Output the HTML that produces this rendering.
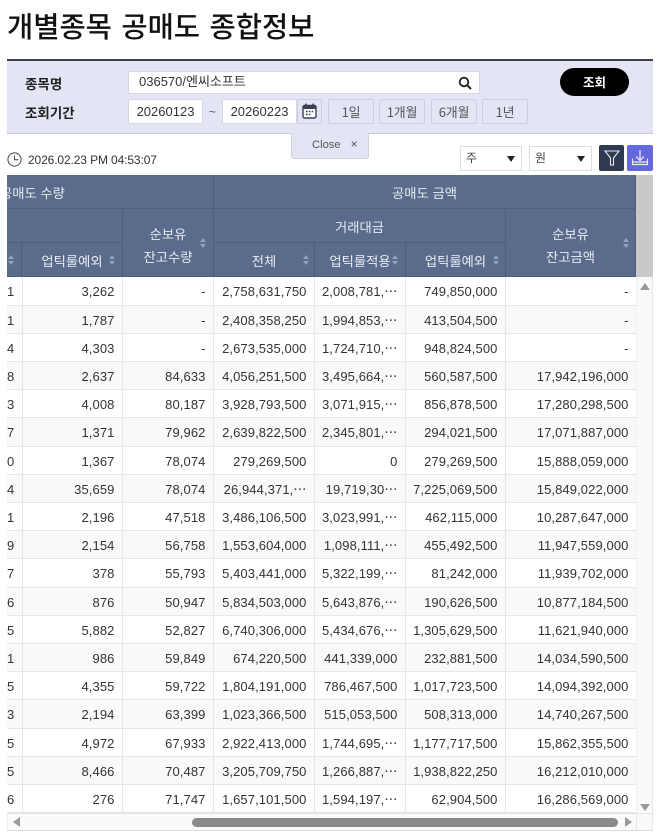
<!DOCTYPE html>
<html lang="ko"><head><meta charset="utf-8">
<style>
*{box-sizing:border-box;margin:0;padding:0}
html,body{width:658px;height:837px;background:#fff;overflow:hidden}
body{position:relative;font-family:"Liberation Sans","Noto Sans CJK KR",sans-serif;color:#333}
.a{position:absolute}
h1{position:absolute;left:7px;top:7px;font-size:28.5px;line-height:38px;font-weight:500;color:#111;font-family:"Noto Sans CJK KR","Liberation Sans",sans-serif;word-spacing:1.5px;white-space:nowrap}
.lbl{position:absolute;left:25px;font-size:13.5px;font-weight:700;color:#222;line-height:18px;font-family:"Noto Sans CJK KR",sans-serif}
.inp{position:absolute;background:#fff;border:1px solid #d5d7e6;border-radius:2px;font-size:13px;color:#333;line-height:23px}
.btn{position:absolute;top:99px;height:25px;border:1px solid #cdcfdf;background:#e3e5f5;border-radius:2px;font-size:13px;letter-spacing:-.2px;color:#555;text-align:center;line-height:24px;font-family:"Noto Sans CJK KR",sans-serif;white-space:nowrap}
.sel{position:absolute;top:146px;height:25px;border:1px solid #ddd;background:#fff;font-size:12px;line-height:22px;padding-left:5px;color:#444;font-family:"Noto Sans CJK KR",sans-serif}
.sel i{position:absolute;right:6px;top:9px;width:0;height:0;border-left:4.5px solid transparent;border-right:4.5px solid transparent;border-top:6px solid #222}
.h{position:absolute;background:#5a6b8c;color:#e9ecf3;font-size:13.3px;text-align:center;font-family:"Noto Sans CJK KR",sans-serif;border-right:1px solid #4d5d7c;border-bottom:1px solid #4d5d7c;white-space:nowrap}
.s{position:absolute;width:7px;height:10px}
.s:before,.s:after{content:"";position:absolute;left:0;width:0;height:0;border-left:3.5px solid transparent;border-right:3.5px solid transparent}
.s:before{top:0;border-bottom:4px solid #93a2bd}
.s:after{bottom:0;border-top:4px solid #93a2bd}
table{position:absolute;left:7px;top:277px;width:629px;border-collapse:collapse;table-layout:fixed;font-size:13px;letter-spacing:.1px;color:#333}
td{height:28.2px;padding:2px 7px 0 0;vertical-align:top;text-align:right;border-right:1px solid #e6e6e6;border-bottom:1px solid #e6e6e6;white-space:nowrap;overflow:hidden;line-height:25px}
td:first-child{text-align:left;padding:2px 0 0}
tr:nth-child(even) td{background:#f9f9f9}
</style></head><body>
<h1>개별종목 공매도 종합정보</h1>

<div class="a" style="left:7px;top:59px;width:646px;height:75px;background:#e3e5f5;border-top:2px solid #3d4350;border-bottom:1px solid #c9cbdc"></div>
<div class="lbl" style="top:74px">종목명</div>
<div class="lbl" style="top:103px">조회기간</div>
<div class="inp" style="left:128px;top:71px;width:352px;height:23px;padding-left:10px;line-height:20px;font-size:13px;font-family:'Liberation Sans','Noto Sans CJK KR',sans-serif">036570/엔씨소프트</div>
<svg class="a" style="left:458px;top:76px" width="14" height="14" viewBox="0 0 14 14"><circle cx="6" cy="6" r="4.3" fill="none" stroke="#222" stroke-width="1.8"/><path d="M9.2 9.2L13 13" stroke="#222" stroke-width="2"/></svg>
<div class="a" style="left:560px;top:68px;width:69px;height:28px;background:#000;border-radius:14px;color:#fff;font-size:12.5px;font-weight:700;text-align:center;line-height:27px;font-family:'Noto Sans CJK KR',sans-serif">조회</div>
<div class="inp" style="left:128px;top:99px;width:75px;height:25px;text-align:center">20260123</div>
<div class="a" style="left:209px;top:105px;font-size:12px;color:#555;line-height:14px">~</div>
<div class="inp" style="left:222px;top:99px;width:75px;height:25px;text-align:center">20260223</div>
<div class="a" style="left:297px;top:99px;width:25px;height:25px;border:1px solid #cdcfdf;border-radius:2px"></div>
<svg class="a" style="left:302px;top:103px" width="15" height="16" viewBox="0 0 15 16"><rect x="1" y="2.5" width="13" height="12.5" rx="1.5" fill="#fff" stroke="#3a4152" stroke-width="1.4"/><rect x="1" y="2.5" width="13" height="3.5" fill="#3a4152"/><path d="M4 .5v3M11 .5v3" stroke="#3a4152" stroke-width="1.5"/><path d="M4 8.5h1.6M6.8 8.5h1.6M9.6 8.5h1.6M4 11.5h1.6M6.8 11.5h1.6" stroke="#3a4152" stroke-width="1.6"/></svg>
<div class="btn" style="left:328px;width:46px">1일</div>
<div class="btn" style="left:379px;width:46px">1개월</div>
<div class="btn" style="left:431px;width:46px">6개월</div>
<div class="btn" style="left:482px;width:46px">1년</div>

<div class="a" style="left:291px;top:133px;width:78px;height:26px;background:#e3e5f5;border:1px solid #cfd1e2;border-top:none;border-radius:0 0 3px 3px;font-size:11.2px;color:#555;line-height:22px;padding-left:20px;white-space:nowrap">Close<span style="margin-left:10px;font-size:12px">×</span></div>

<svg class="a" style="left:7px;top:152px" width="15" height="15" viewBox="0 0 15 15"><circle cx="7.5" cy="7.5" r="6.6" fill="none" stroke="#444" stroke-width="1"/><path d="M7.5 3.5v4.2h4" fill="none" stroke="#444" stroke-width="1"/></svg>
<div class="a" style="left:28px;top:153px;font-size:12px;line-height:15px;color:#333;letter-spacing:-.12px;white-space:nowrap">2026.02.23 PM 04:53:07</div>

<div class="sel" style="left:460px;width:62px">주<i></i></div>
<div class="sel" style="left:529px;width:63px">원<i></i></div>
<div class="a" style="left:599px;top:145px;width:25px;height:26px;background:#303a50;border-radius:2px"></div>
<svg class="a" style="left:603px;top:149px" width="18" height="18" viewBox="0 0 18 18"><path d="M2 2h14l-5.5 7v7h-3V9z" fill="none" stroke="#e8eaf0" stroke-width="1.1"/></svg>
<div class="a" style="left:627px;top:145px;width:26px;height:26px;background:#6468dd;border-radius:2px"></div>
<svg class="a" style="left:631px;top:149px" width="18" height="18" viewBox="0 0 18 18"><path d="M9 1v10M5 7.5L9 11.5l4-4" fill="none" stroke="#e6e7fb" stroke-width="1.3"/><path d="M1.5 9.5v6h15v-6M1.5 13h15" fill="none" stroke="#e6e7fb" stroke-width="1.2"/></svg>

<!-- table header -->
<div class="a" style="left:7px;top:175px;width:629px;height:102px;background:#5a6b8c;overflow:hidden">
<div class="h" style="left:0;top:0;width:207px;height:34px;line-height:35px;text-align:left;text-indent:-7px">공매도 수량</div>
<div class="h" style="left:207px;top:0;width:422px;height:34px;line-height:35px">공매도 금액</div>
<div class="h" style="left:0;top:34px;width:116px;height:34px"></div>
<div class="h" style="left:116px;top:34px;width:91px;height:68px;line-height:23px;padding-top:13px;white-space:normal">순보유<br>잔고수량</div>
<div class="h" style="left:207px;top:34px;width:292px;height:34px;line-height:35px">거래대금</div>
<div class="h" style="left:499px;top:34px;width:130px;height:68px;line-height:23px;padding-top:13px;white-space:normal">순보유<br>잔고금액</div>
<div class="h" style="left:0;top:68px;width:15px;height:34px"></div>
<div class="h" style="left:15px;top:68px;width:101px;height:34px;line-height:35px">업틱룰예외</div>
<div class="h" style="left:207px;top:68px;width:101px;height:34px;line-height:35px">전체</div>
<div class="h" style="left:308px;top:68px;width:91px;height:34px;line-height:35px">업틱룰적용</div>
<div class="h" style="left:399px;top:68px;width:100px;height:34px;line-height:35px">업틱룰예외</div>
<span class="s" style="left:1px;top:80px"></span>
<span class="s" style="left:102px;top:80px"></span>
<span class="s" style="left:193px;top:63px"></span>
<span class="s" style="left:296px;top:80px"></span>
<span class="s" style="left:385px;top:80px"></span>
<span class="s" style="left:486px;top:80px"></span>
<span class="s" style="left:616px;top:63px"></span>
</div>

<table>
<colgroup><col style="width:15px"><col style="width:100px"><col style="width:91px"><col style="width:101px"><col style="width:91px"><col style="width:100px"><col style="width:131px"></colgroup>
<tr><td>1</td><td>3,262</td><td>-</td><td>2,758,631,750</td><td>2,008,781,⋯</td><td>749,850,000</td><td>-</td></tr>
<tr><td>1</td><td>1,787</td><td>-</td><td>2,408,358,250</td><td>1,994,853,⋯</td><td>413,504,500</td><td>-</td></tr>
<tr><td>4</td><td>4,303</td><td>-</td><td>2,673,535,000</td><td>1,724,710,⋯</td><td>948,824,500</td><td>-</td></tr>
<tr><td>8</td><td>2,637</td><td>84,633</td><td>4,056,251,500</td><td>3,495,664,⋯</td><td>560,587,500</td><td>17,942,196,000</td></tr>
<tr><td>3</td><td>4,008</td><td>80,187</td><td>3,928,793,500</td><td>3,071,915,⋯</td><td>856,878,500</td><td>17,280,298,500</td></tr>
<tr><td>7</td><td>1,371</td><td>79,962</td><td>2,639,822,500</td><td>2,345,801,⋯</td><td>294,021,500</td><td>17,071,887,000</td></tr>
<tr><td>0</td><td>1,367</td><td>78,074</td><td>279,269,500</td><td>0</td><td>279,269,500</td><td>15,888,059,000</td></tr>
<tr><td>4</td><td>35,659</td><td>78,074</td><td>26,944,371,⋯</td><td>19,719,30⋯</td><td>7,225,069,500</td><td>15,849,022,000</td></tr>
<tr><td>1</td><td>2,196</td><td>47,518</td><td>3,486,106,500</td><td>3,023,991,⋯</td><td>462,115,000</td><td>10,287,647,000</td></tr>
<tr><td>9</td><td>2,154</td><td>56,758</td><td>1,553,604,000</td><td>1,098,111,⋯</td><td>455,492,500</td><td>11,947,559,000</td></tr>
<tr><td>7</td><td>378</td><td>55,793</td><td>5,403,441,000</td><td>5,322,199,⋯</td><td>81,242,000</td><td>11,939,702,000</td></tr>
<tr><td>6</td><td>876</td><td>50,947</td><td>5,834,503,000</td><td>5,643,876,⋯</td><td>190,626,500</td><td>10,877,184,500</td></tr>
<tr><td>5</td><td>5,882</td><td>52,827</td><td>6,740,306,000</td><td>5,434,676,⋯</td><td>1,305,629,500</td><td>11,621,940,000</td></tr>
<tr><td>1</td><td>986</td><td>59,849</td><td>674,220,500</td><td>441,339,000</td><td>232,881,500</td><td>14,034,590,500</td></tr>
<tr><td>5</td><td>4,355</td><td>59,722</td><td>1,804,191,000</td><td>786,467,500</td><td>1,017,723,500</td><td>14,094,392,000</td></tr>
<tr><td>3</td><td>2,194</td><td>63,399</td><td>1,023,366,500</td><td>515,053,500</td><td>508,313,000</td><td>14,740,267,500</td></tr>
<tr><td>5</td><td>4,972</td><td>67,933</td><td>2,922,413,000</td><td>1,744,695,⋯</td><td>1,177,717,500</td><td>15,862,355,500</td></tr>
<tr><td>5</td><td>8,466</td><td>70,487</td><td>3,205,709,750</td><td>1,266,887,⋯</td><td>1,938,822,250</td><td>16,212,010,000</td></tr>
<tr><td>6</td><td>276</td><td>71,747</td><td>1,657,101,500</td><td>1,594,197,⋯</td><td>62,904,500</td><td>16,286,569,000</td></tr>
</table>

<!-- vertical scrollbar -->
<div class="a" style="left:636px;top:175px;width:17px;height:102px;background:#c9c9c9"></div>
<div class="a" style="left:636px;top:277px;width:17px;height:537px;background:#fafafa;border-left:1px solid #eee;border-right:1px solid #e6e6e6"></div>
<div class="a" style="left:640px;top:283px;width:0;height:0;border-left:5px solid transparent;border-right:5px solid transparent;border-bottom:7px solid #999"></div>
<div class="a" style="left:640px;top:804px;width:0;height:0;border-left:5px solid transparent;border-right:5px solid transparent;border-top:7px solid #999"></div>
<!-- horizontal scrollbar -->
<div class="a" style="left:7px;top:813px;width:646px;height:18px;background:#fafafa;border-top:1px solid #e4e4e4;border-bottom:1px solid #ddd;border-left:1px solid #eee;border-right:1px solid #e6e6e6"></div>
<div class="a" style="left:636px;top:814px;width:1px;height:16px;background:#e6e6e6"></div>
<div class="a" style="left:192px;top:818px;width:426px;height:9px;background:#8a8a8a;border-radius:5px"></div>
<div class="a" style="left:13px;top:817px;width:0;height:0;border-top:5px solid transparent;border-bottom:5px solid transparent;border-right:7px solid #999"></div>
<div class="a" style="left:625px;top:817px;width:0;height:0;border-top:5px solid transparent;border-bottom:5px solid transparent;border-left:7px solid #999"></div>
</body></html>
